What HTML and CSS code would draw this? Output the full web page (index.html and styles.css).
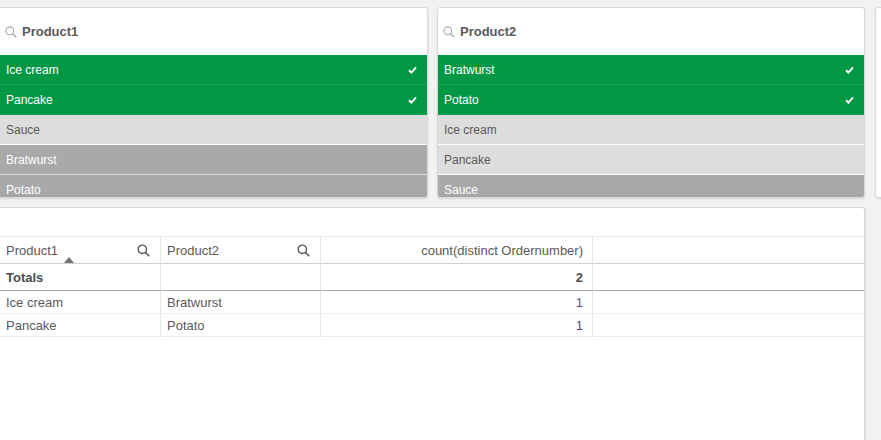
FILE: index.html
```html
<!DOCTYPE html>
<html>
<head>
<meta charset="utf-8">
<link rel="stylesheet" href="styles.css">
</head>
<body>
<div class="top">
  <section class="lb lb-first">
    <header class="lb-head">
      <svg class="lb-search" width="12" height="12" viewBox="0 0 12 12"><circle cx="4.8" cy="4.8" r="3.9" fill="none" stroke="#a6a6a6" stroke-width="1.1"/><path d="M7.7 7.7 L11.3 11.3" stroke="#a6a6a6" stroke-width="1.3"/></svg>
      <span class="lb-title">Product1</span>
    </header>
    <ul class="lb-list">
      <li class="row sel">Ice cream<svg class="chk" width="9" height="8" viewBox="0 0 9 8"><path d="M1 4.3 L3.4 6.6 L8 1.3" fill="none" stroke="#fff" stroke-width="1.9"/></svg></li>
      <li class="row sel">Pancake<svg class="chk" width="9" height="8" viewBox="0 0 9 8"><path d="M1 4.3 L3.4 6.6 L8 1.3" fill="none" stroke="#fff" stroke-width="1.9"/></svg></li>
      <li class="row alt">Sauce</li>
      <li class="row exc">Bratwurst</li>
      <li class="row exc">Potato</li>
    </ul>
  </section>
  <section class="lb">
    <header class="lb-head">
      <svg class="lb-search" width="12" height="12" viewBox="0 0 12 12"><circle cx="4.8" cy="4.8" r="3.9" fill="none" stroke="#a6a6a6" stroke-width="1.1"/><path d="M7.7 7.7 L11.3 11.3" stroke="#a6a6a6" stroke-width="1.3"/></svg>
      <span class="lb-title">Product2</span>
    </header>
    <ul class="lb-list">
      <li class="row sel">Bratwurst<svg class="chk" width="9" height="8" viewBox="0 0 9 8"><path d="M1 4.3 L3.4 6.6 L8 1.3" fill="none" stroke="#fff" stroke-width="1.9"/></svg></li>
      <li class="row sel">Potato<svg class="chk" width="9" height="8" viewBox="0 0 9 8"><path d="M1 4.3 L3.4 6.6 L8 1.3" fill="none" stroke="#fff" stroke-width="1.9"/></svg></li>
      <li class="row alt">Ice cream</li>
      <li class="row alt">Pancake</li>
      <li class="row exc">Sauce</li>
    </ul>
  </section>
  <section class="lb lb-third"></section>
</div>

<section class="tbl-panel">
  <div class="grid">
    <div class="cell th">Product1
      <svg class="th-search" width="13" height="13" viewBox="0 0 13 13"><circle cx="5.3" cy="5.3" r="4.2" fill="none" stroke="#595959" stroke-width="1.4"/><path d="M8.4 8.4 L12.2 12.2" stroke="#595959" stroke-width="1.6"/></svg>
      <span class="sort"></span>
    </div>
    <div class="cell th">Product2
      <svg class="th-search" width="13" height="13" viewBox="0 0 13 13"><circle cx="5.3" cy="5.3" r="4.2" fill="none" stroke="#595959" stroke-width="1.4"/><path d="M8.4 8.4 L12.2 12.2" stroke="#595959" stroke-width="1.6"/></svg>
    </div>
    <div class="cell th num">count(distinct Ordernumber)</div>
    <div class="cell th last"></div>

    <div class="cell tot"><b>Totals</b></div>
    <div class="cell tot"></div>
    <div class="cell tot num"><b>2</b></div>
    <div class="cell tot last"></div>

    <div class="cell td">Ice cream</div>
    <div class="cell td">Bratwurst</div>
    <div class="cell td num val">1</div>
    <div class="cell td last"></div>

    <div class="cell td">Pancake</div>
    <div class="cell td">Potato</div>
    <div class="cell td num val">1</div>
    <div class="cell td last"></div>
  </div>
</section>
</body>
</html>
```

FILE: styles.css
```css
* { box-sizing: border-box; }
html, body {
  margin: 0;
  padding: 0;
  width: 881px;
  height: 440px;
  overflow: hidden;
  background: #f2f2f2;
  font-family: "Liberation Sans", Arial, sans-serif;
  color: #595959;
}

.top {
  display: flex;
  gap: 9px;
  padding-top: 7px;
}

.lb {
  width: 428px;
  height: 191px;
  flex: none;
  background: #fff;
  border: 1px solid #d9d9d9;
  border-radius: 3px;
  box-shadow: 0 1px 2px rgba(0,0,0,0.12);
  overflow: hidden;
  display: flex;
  flex-direction: column;
}
.lb-first {
  border-left: none;
  border-radius: 0 3px 3px 0;
}
.lb-third {
  width: 40px;
  margin-left: 1px;
}

.lb-head {
  height: 47px;
  flex: none;
  display: flex;
  align-items: center;
  padding-left: 5px;
  gap: 5px;
}
.lb-search { display: block; margin-top: 1px; }
.lb-title {
  font-size: 13px;
  font-weight: bold;
  color: #595959;
}

.lb-list {
  list-style: none;
  margin: 0;
  padding: 0;
  flex: 1;
  overflow: hidden;
}
.row {
  height: 30px;
  display: flex;
  align-items: center;
  justify-content: space-between;
  padding: 0 10px 0 6px;
  font-size: 12px;
  border-bottom: 1px solid #fff;
}
.row.sel {
  background: #009845;
  color: #fff;
  border-bottom-color: #16a652;
}
.row.alt {
  background: #dddddd;
  color: #595959;
  border-bottom-color: #fff;
}
.row.exc {
  background: #a9a9a9;
  color: #fff;
  border-bottom-color: #dadada;
}
.row.exc:last-child {
  background: linear-gradient(#a9a9a9 0%, #a9a9a9 55%, #9f9f9f 100%);
}
.chk { display: block; }

.tbl-panel {
  margin-top: 9px;
  width: 865px;
  height: 240px;
  background: #fff;
  border: 1px solid #d9d9d9;
  border-left: none;
  border-radius: 0 3px 0 0;
  box-shadow: 1px 0 1px rgba(0,0,0,0.08);
  padding-top: 28px;
}

.grid {
  display: grid;
  grid-template-columns: 161px 160px 272px 1fr;
  grid-template-rows: 27px 27px 23px 23px;
  border-top: 1px solid #e8e8e8;
  font-size: 13px;
}
.cell {
  position: relative;
  display: flex;
  align-items: center;
  padding: 0 6px;
  border-right: 1px solid #e6e6e6;
  border-bottom: 1px solid #ececec;
}
.cell.last { border-right: none; }
.cell.num { justify-content: flex-end; padding-right: 9px; }

.th {
  border-bottom-color: #cfcfcf;
  justify-content: space-between;
  padding-right: 10px;
}
.th.num { justify-content: flex-end; padding-right: 9px; }
.th-search { display: block; }
.sort {
  position: absolute;
  left: 64px;
  top: 20px;
  width: 0;
  height: 0;
  border-left: 5px solid transparent;
  border-right: 5px solid transparent;
  border-bottom: 6px solid #737373;
}

.tot {
  border-bottom-color: #a8a8a8;
}
.tot b { font-weight: bold; color: #4d4d4d; }

.val { color: #5d4a7c; }
```
